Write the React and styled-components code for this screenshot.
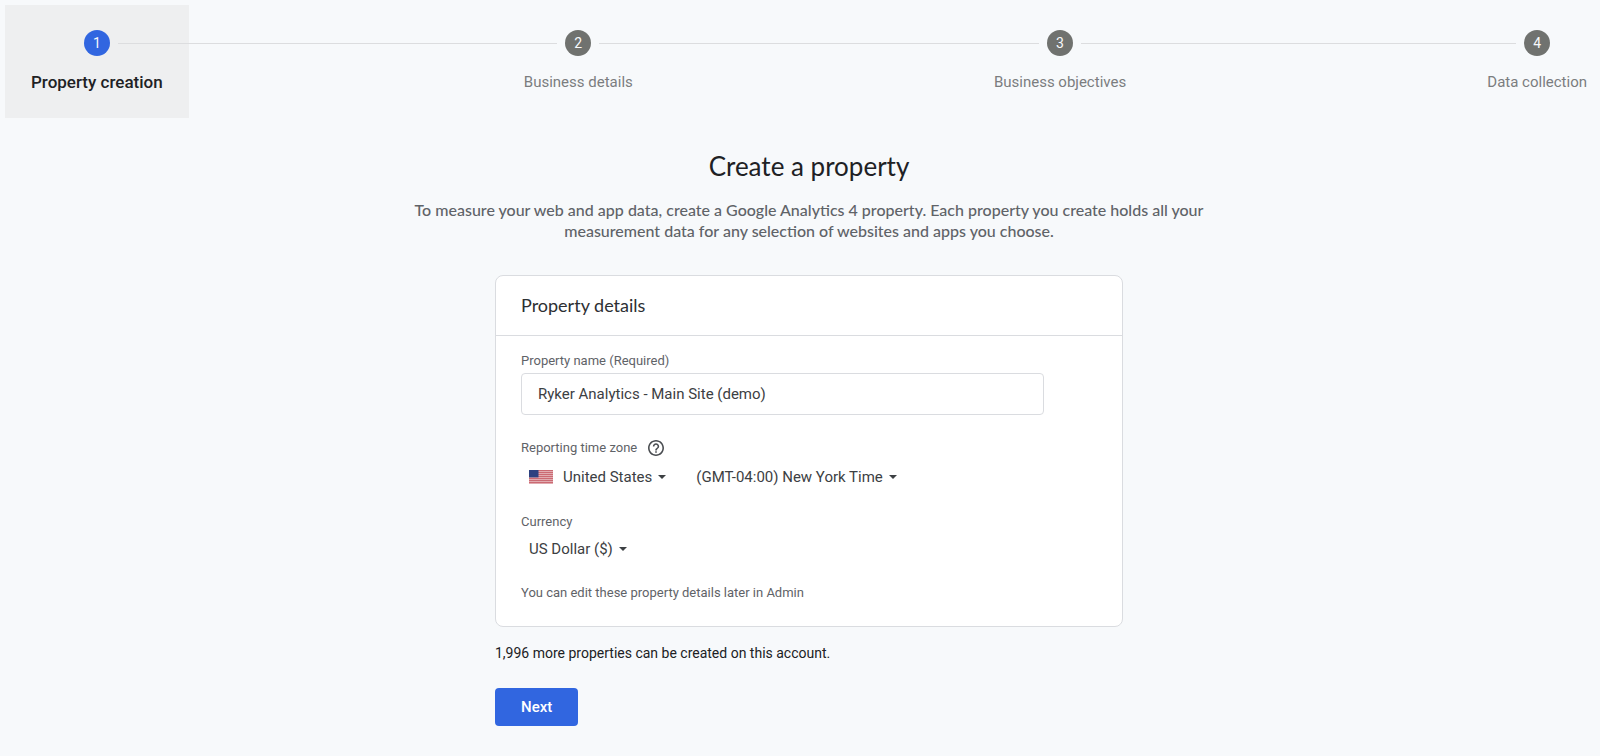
import React from "react";
import styled, { createGlobalStyle } from "styled-components";

const GlobalStyle = createGlobalStyle`
  *, *::before, *::after { box-sizing: border-box; }
  html { background: #f7f9fb; }
  body {
    margin: 0;
    overflow-x: hidden;
    font-family: Roboto, "Liberation Sans", sans-serif;
    color: #202124;
  }
`;

const Page = styled.div`
  padding: 5px 0 30px 5px;
  margin-right: -13px;
`;

const Steps = styled.ol`
  display: flex;
  align-items: flex-start;
  list-style: none;
  margin: 0;
  padding: 0;
`;

const Step = styled.li`
  flex: none;
  display: flex;
  flex-direction: column;
  height: 113px;
  padding-top: 25px;
  background: ${(p) => (p.$active ? "#eeeff0" : "transparent")};
`;

const Track = styled.div`
  display: flex;
  align-items: center;
  gap: 8px;
`;

const Rail = styled.span`
  flex: 1;
  height: 1px;
  background: ${(p) => (p.$hidden ? "transparent" : "#dcdddf")};
`;

const Connector = styled.li`
  flex: 1;
  height: 1px;
  margin-top: 38px;
  background: #dcdddf;
`;

const StepNumber = styled.span`
  width: 26px;
  height: 26px;
  border-radius: 50%;
  display: grid;
  place-items: center;
  font-size: 14px;
  line-height: 26px;
  color: #f8f9fb;
  background: ${(p) => (p.$active ? "#3166e0" : "#70726f")};
`;

const StepLabel = styled.span`
  margin-top: 16px;
  padding: 0 26px;
  font-size: ${(p) => (p.$active ? 17 : 15)}px;
  line-height: 21px;
  font-weight: ${(p) => (p.$active ? 500 : 400)};
  color: ${(p) => (p.$active ? "#202124" : "#7b7d7f")};
`;

const Main = styled.main`
  display: flex;
  flex-direction: column;
  align-items: center;
`;

const Title = styled.h1`
  margin: 30px 0 0;
  font-family: Lato, sans-serif;
  font-size: 26px;
  line-height: 36px;
  font-weight: 400;
`;

const Intro = styled.p`
  margin: 15px 0 0;
  max-width: 836px;
  font-family: Lato, sans-serif;
  font-size: 16px;
  line-height: 21px;
  font-weight: 500;
  text-align: center;
  color: #5f6368;
`;

const Form = styled.form`
  width: 100%;
  max-width: 628px;
  margin-top: 34px;
`;

const Card = styled.section`
  background: #fff;
  border: 1px solid #dadce0;
  border-radius: 8px;
`;

const CardTitle = styled.h2`
  margin: 0;
  padding: 18px 25px;
  border-bottom: 1px solid #dadce0;
  font-family: Lato, sans-serif;
  font-size: 18px;
  line-height: 23px;
  font-weight: 400;
  color: #2d2f33;
`;

const CardBody = styled.div`
  padding: 16px 25px 24px;
`;

const Label = styled.label`
  display: block;
  font-size: 13px;
  line-height: 18px;
  color: #5f6368;
`;

const TextInput = styled.input`
  display: block;
  width: 100%;
  max-width: 523px;
  height: 42px;
  margin-top: 3px;
  padding: 0 16px;
  border: 1px solid #dadce0;
  border-radius: 4px;
  font: 400 15px Roboto, sans-serif;
  color: #3c4043;
  background: #fff;
`;

const LabelRow = styled.div`
  display: flex;
  align-items: center;
  gap: 11px;
  margin-top: 24px;
`;

const HelpButton = styled.button`
  display: flex;
  padding: 0;
  border: 0;
  background: none;
  color: #4b4e52;
`;

const PickerRow = styled.div`
  display: flex;
  align-items: center;
  gap: 30px;
  margin-top: ${(p) => p.$gap}px;
  padding-left: 8px;
`;

const Picker = styled.span`
  display: flex;
  align-items: center;
`;

const Select = styled.select`
  appearance: none;
  field-sizing: content;
  padding: 0 14px 0 0;
  margin: 0 -8px 0 0;
  border: 0;
  height: 20px;
  font: 400 15px/20px Roboto, sans-serif;
  color: #3c4043;
  background: none;
`;

const CaretIcon = styled.svg`
  pointer-events: none;
`;

const FlagIcon = styled.svg`
  margin-right: 10px;
`;

const CurrencyLabel = styled(Label)`
  margin-top: 26px;
`;

const Note = styled.p`
  margin: 25px 0 0;
  font-size: 13px;
  line-height: 18px;
  color: #5f6368;
`;

const Quota = styled.p`
  margin: 17px 0 0;
  font-size: 14px;
  line-height: 18px;
`;

const NextButton = styled.button`
  display: block;
  height: 38px;
  margin-top: 26px;
  padding: 0 26px;
  border: 0;
  border-radius: 4px;
  background: #3166e0;
  color: #fff;
  font: 500 15px Roboto, sans-serif;
`;

const Caret = () => (
  <CaretIcon width="8" height="4" viewBox="0 0 8 4" aria-hidden="true">
    <path d="M0 0h8L4 4z" fill="#3c4043" />
  </CaretIcon>
);

const Flag = () => (
  <FlagIcon width="24" height="14" viewBox="0 0 24 14" aria-hidden="true">
    <rect width="24" height="14" fill="#e7bcc0" />
    {[0, 2, 4, 6, 8, 10, 12].map((y) => (
      <rect key={y} y={y} width="24" height="1.2" fill="#cb6a73" />
    ))}
    <rect width="9.5" height="7.4" fill="#2c4180" />
  </FlagIcon>
);

const steps = ["Property creation", "Business details", "Business objectives", "Data collection"];

function Dropdown({ id, label, value, children }) {
  return (
    <Picker>
      {children}
      <Select id={id} aria-label={label} defaultValue={value}>
        <option>{value}</option>
      </Select>
      <Caret />
    </Picker>
  );
}

export default function App() {
  return (
    <>
      <GlobalStyle />
      <Page>
        <Steps>
          {steps.map((name, i) => (
            <React.Fragment key={name}>
              {i > 0 && <Connector aria-hidden="true" />}
              <Step $active={i === 0} aria-current={i === 0 ? "step" : undefined}>
                <Track>
                  <Rail $hidden={i === 0} />
                  <StepNumber $active={i === 0}>{i + 1}</StepNumber>
                  <Rail $hidden={i === steps.length - 1} />
                </Track>
                <StepLabel $active={i === 0}>{name}</StepLabel>
              </Step>
            </React.Fragment>
          ))}
        </Steps>
        <Main>
          <Title>Create a property</Title>
          <Intro>
            To measure your web and app data, create a Google Analytics 4 property. Each property you create holds all
            your measurement data for any selection of websites and apps you choose.
          </Intro>
          <Form onSubmit={(e) => e.preventDefault()}>
            <Card>
              <CardTitle>Property details</CardTitle>
              <CardBody>
                <Label htmlFor="name">Property name (Required)</Label>
                <TextInput id="name" type="text" defaultValue="Ryker Analytics - Main Site (demo)" />
                <LabelRow>
                  <Label htmlFor="country">Reporting time zone</Label>
                  <HelpButton type="button" aria-label="About the reporting time zone">
                    <svg width="16" height="16" viewBox="2 2 20 20" fill="currentColor" aria-hidden="true">
                      <path d="M11 18h2v-2h-2v2zm1-16C6.48 2 2 6.48 2 12s4.48 10 10 10 10-4.480 10-10S17.520 2 12 2zm0 18c-4.410 0-8-3.590-8-8s3.590-8 8-8 8 3.590 8 8-3.590 8-8 8zm0-14c-2.210 0-4 1.790-4 4h2c0-1.100.9-2 2-2s2 .9 2 2c0 2-3 1.750-3 5h2c0-2.250 3-2.500 3-5 0-2.210-1.790-4-4-4z" />
                    </svg>
                  </HelpButton>
                </LabelRow>
                <PickerRow $gap={10}>
                  <Dropdown id="country" label="Country" value="United States">
                    <Flag />
                  </Dropdown>
                  <Dropdown id="zone" label="Time zone" value="(GMT-04:00) New York Time" />
                </PickerRow>
                <CurrencyLabel htmlFor="currency">Currency</CurrencyLabel>
                <PickerRow $gap={8}>
                  <Dropdown id="currency" label="Currency" value="US Dollar ($)" />
                </PickerRow>
                <Note>You can edit these property details later in Admin</Note>
              </CardBody>
            </Card>
            <Quota>1,996 more properties can be created on this account.</Quota>
            <NextButton type="submit">Next</NextButton>
          </Form>
        </Main>
      </Page>
    </>
  );
}
